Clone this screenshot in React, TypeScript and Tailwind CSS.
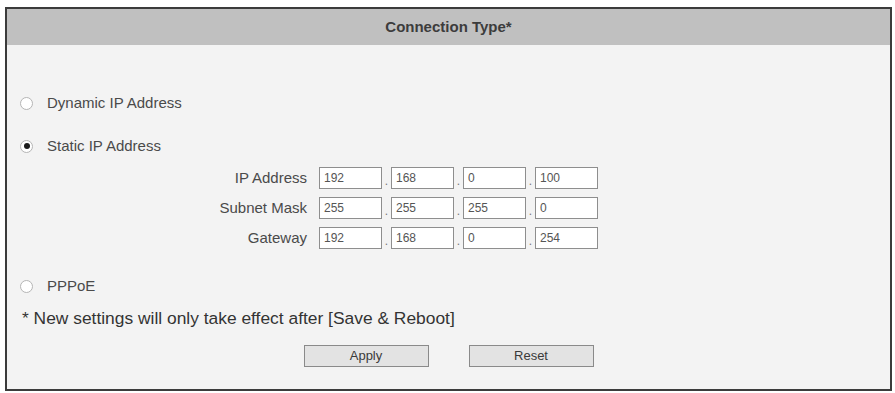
import React from "react";

const font = { fontFamily: '"Liberation Sans", Arial, sans-serif' };

function Radio({ checked, label }: { checked?: boolean; label: string }) {
  return (
    <div className="flex h-[20px] items-center pl-[13px]">
      <span className="flex h-[13px] w-[13px] items-center justify-center rounded-full border border-[#b5b5b5] bg-white">
        {checked && <span className="h-[6px] w-[6px] rounded-full bg-[#1a1a1a]" />}
      </span>
      <span className="ml-[14px] text-[15px] text-[#4a4a4a]">{label}</span>
    </div>
  );
}

function IpRow({ label, parts }: { label: string; parts: string[] }) {
  return (
    <div className="flex h-[22px] items-center">
      <div className="w-[100px] pr-[1px] text-right text-[15px] whitespace-nowrap text-[#4a4a4a]">{label}</div>
      <div className="ml-[11px] flex items-end">
        {parts.map((p, i) => (
          <React.Fragment key={i}>
            {i > 0 && (
              <span className="flex w-[9px] justify-center text-[12px] leading-[16px] text-[#777]">.</span>
            )}
            <div className="flex h-[22px] w-[63px] items-center border border-[#8e8e8e] bg-white pl-[4px] text-[12px] text-[#555]">
              {p}
            </div>
          </React.Fragment>
        ))}
      </div>
    </div>
  );
}

export default function App() {
  return (
    <div className="h-[393px] w-[895px] bg-white pt-[7px] pl-[5px]" style={font}>
      <div className="flex h-[384px] w-[887px] flex-col border-2 border-[#3b3b3b] bg-[#f3f3f3]">
        <div className="flex h-[36px] items-center justify-center bg-[#c0c0c0] text-[15px] font-bold text-[#3c3c3c]">
          Connection Type*
        </div>
        <div className="mt-[48px]">
          <Radio label="Dynamic IP Address" />
        </div>
        <div className="mt-[23px]">
          <Radio checked label="Static IP Address" />
        </div>
        <div className="ml-[201px] mt-[11px] flex flex-col gap-[8px]">
          <IpRow label="IP Address" parts={["192", "168", "0", "100"]} />
          <IpRow label="Subnet Mask" parts={["255", "255", "255", "0"]} />
          <IpRow label="Gateway" parts={["192", "168", "0", "254"]} />
        </div>
        <div className="mt-[27px]">
          <Radio label="PPPoE" />
        </div>
        <div className="mt-[12px] flex h-[20px] items-center pl-[15px] text-[17.4px] text-[#333]">
          * New settings will only take effect after [Save &amp; Reboot]
        </div>
        <div className="mt-[17px] flex justify-center gap-[40px]">
          <button className="h-[22px] w-[125px] border border-[#8a8a8a] bg-[#e3e3e3] text-[13px] text-[#3a3a3a]">
            Apply
          </button>
          <button className="h-[22px] w-[125px] border border-[#8a8a8a] bg-[#e3e3e3] text-[13px] text-[#3a3a3a]">
            Reset
          </button>
        </div>
      </div>
    </div>
  );
}
